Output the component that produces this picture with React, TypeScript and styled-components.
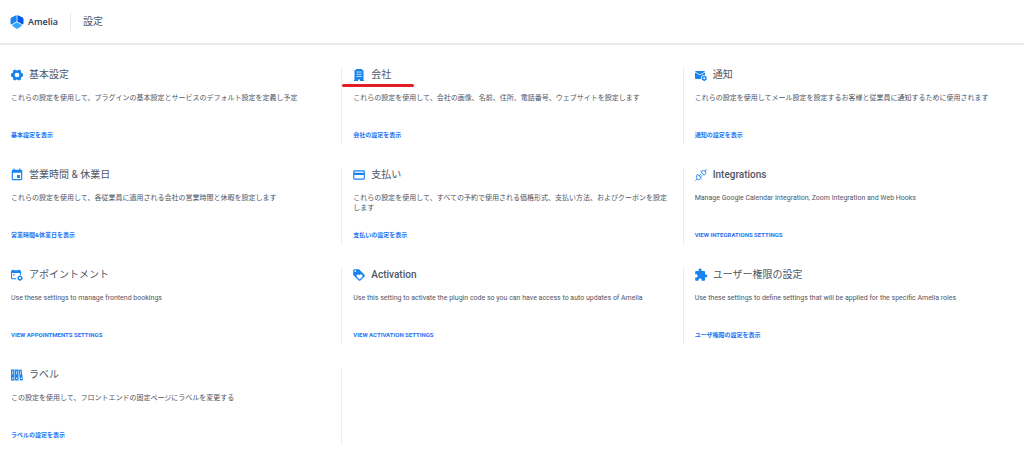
import React from "react";
import styled, { createGlobalStyle } from "styled-components";
import { MdCreditCard, MdEvent, MdExtension, MdLoyalty } from "react-icons/md";

const GlobalStyle = createGlobalStyle`
  *, *::before, *::after { box-sizing: border-box; }
  body {
    margin: 0;
    background: #fff;
    color: #4f5665;
    font-family: Roboto, "Noto Sans CJK JP", sans-serif;
  }
`;

const Header = styled.header`
  display: flex;
  align-items: center;
  height: 45px;
  padding: 0 10px;
  border-bottom: 2px solid #ebecf2;
`;

const Brand = styled.div`
  display: flex;
  align-items: center;
  gap: 4px;
  padding-right: 12px;
  height: 18px;
  border-right: 1px solid #e4e6ee;
  color: #2b3a5c;
  font-family: "Open Sans", sans-serif;
  font-size: 9px;
  font-weight: 600;
  line-height: 18px;
`;

const PageTitle = styled.h1`
  margin: 0;
  padding-left: 12px;
  font-size: 10px;
  font-weight: 400;
  line-height: 16px;
`;

const Grid = styled.main`
  display: grid;
  grid-template-columns: repeat(3, 1fr);
  row-gap: 24px;
  padding: 23px 0 20px;
`;

const Card = styled.section`
  display: flex;
  flex-direction: column;
  min-height: 76px;
  padding: 0 15px 4px 11px;
  border-left: 1px solid #e9ebf0;

  &:nth-child(3n + 1) {
    padding-left: 10px;
    border-left-color: transparent;
  }
`;

/* Closes the last row when it holds fewer than three cards. */
const RowEnd = styled.div`
  border-left: 1px solid #e9ebf0;
`;

const CardHead = styled.div`
  position: relative;
  display: flex;
  align-items: center;
  gap: 6px;
  height: 14px;
  margin-bottom: 11px;
`;

const IconBox = styled.span`
  display: flex;
  align-items: center;
  justify-content: center;
  width: 12px;
  height: 14px;
  color: #1a84ee;

  svg {
    flex: none;
    display: block;
  }
`;

const CardTitle = styled.h2`
  margin: 0;
  font-size: 10px;
  font-weight: ${(p: { $latin?: boolean }) => (p.$latin ? 500 : 400)};
  line-height: 14px;
`;

const Marker = styled.span`
  position: absolute;
  left: -11px;
  top: 16px;
  width: 72px;
  height: 3px;
  border-radius: 2px;
  background: #e21f26;
`;

const Description = styled.p`
  margin: 0;
  font-size: 7px;
  line-height: 10px;
`;

const CardLink = styled.a`
  align-self: flex-start;
  margin-top: auto;
  color: #2474f5;
  font-size: 6px;
  font-weight: 700;
  line-height: 10px;
  text-decoration: none;
  text-transform: uppercase;
`;

const Svg = ({ children }: { children: React.ReactNode }) => (
  <svg width="12" height="12" viewBox="0 0 24 24" fill="currentColor" aria-hidden="true">
    {children}
  </svg>
);

const Logo = () => (
  <svg width="14" height="14" viewBox="0 0 28 28" aria-hidden="true">
    <path d="M13.300 1v12L3 19.200Q1 18.500 1 16V8Q1 6 2.800 5L11 .8Q13.300 0 13.300 1z" fill="#1a84ee" />
    <path d="M14.700 1v12L25 19.200Q27 18.500 27 16V8Q27 6 25.200 5L17 .8Q14.700 0 14.700 1z" fill="#005aee" />
    <path d="M14 14.300L23.800 20.200Q24 21.500 22.500 22.300L16 26.800Q14 28 12 26.800L5.500 22.300Q4 21.500 4.200 20.200z" fill="#3ba6ff" />
  </svg>
);

const GearIcon = () => (
  <Svg>
    <path
      fillRule="evenodd"
      d="M6.500 1.500h3.200L12 3.700l2.300-2.200h3.200l2.300 1.500.2 4L24 9.500v5L20 17l-.2 4-2.300 1.500h-3.200L12 20.300l-2.300 2.200H6.500L4.200 21 4 17 0 14.500v-5L4 7l.2-4zM12 7.300a4.700 4.700 0 1 0 0 9.400 4.700 4.700 0 0 0 0-9.400z"
    />
  </Svg>
);

const BuildingIcon = () => (
  <Svg>
    <path
      fillRule="evenodd"
      d="M6 0h12v2h3v20h1v2h-8v-3h-4v3H2v-2h1V2h3zM7.500 5v2H10V5zm3.500 0v2h2.500V5zm3.500 0v2H17V5zM7.500 9.500v2H10v-2zm3.500 0v2h2.500v-2zm3.500 0v2H17v-2zM7.500 14v2H10v-2zm3.500 0v2h2.500v-2zm3.500 0v2H17v-2z"
    />
  </Svg>
);

const smallGear =
  "M16.500 12.500h3l.6 1.500 1.700-.2 1.500 2.600-1.100 1.300 1.100 1.300-1.500 2.600-1.700-.2-.6 1.600h-3l-.6-1.600-1.700.2-1.500-2.600 1.100-1.300-1.100-1.300 1.500-2.600 1.700.2zM18 15.600a2.100 2.100 0 1 0 0 4.200 2.100 2.100 0 0 0 0-4.200z";

const MailGearIcon = () => (
  <Svg>
    <path d="M2 4h16q1.500 0 1.800 1.500L10 11 .2 5.500Q.5 4 2 4z" />
    <path d="M0 7l10 5.700L20 7v5.500q-7.500-2-8.500 7.500H2q-2 0-2-2z" />
    <path fillRule="evenodd" transform="translate(.5 .8)" d={smallGear} />
  </Svg>
);

const CalendarGearIcon = () => (
  <Svg>
    <path
      fillRule="evenodd"
      d="M3 1h2v1.500h10V1h2v1.500h1q2 0 2 2V12h-2V8H2v10.500h8.500v2H2q-2 0-2-2v-14q0-2 2-2h1zM4 10.500h3v2.500H4z"
    />
    <path fillRule="evenodd" transform="translate(0 .5)" d={smallGear} />
  </Svg>
);

const PlugIcon = () => (
  <Svg>
    <g fill="none" stroke="currentColor" strokeWidth="1.800" strokeLinecap="round" strokeLinejoin="round">
      <path d="M12 6l6.500 6.500 2-2.200q2.500-3.300 0-6t-6-.600z" />
      <path d="M20.300 4L23 1.200" />
      <path d="M5.500 11l7.200 7.200-2.200 2.200q-3.500 2.300-6.200-.5t-1-6.400z" />
      <path d="M4 20.300L1.200 23M8.500 13.500l3.300-3.300M11 16l3.300-3.300" />
    </g>
  </Svg>
);

const BindersIcon = () => (
  <Svg>
    <path fillRule="evenodd" d="M0 1h7v22H0zM2.800 4v7h1.400V4zM3.500 17a1.500 1.500 0 1 0 0 3 1.500 1.500 0 0 0 0-3z" />
    <path fillRule="evenodd" d="M8 1h7v22H8zM10.800 4v7h1.400V4zM11.500 17a1.500 1.500 0 1 0 0 3 1.500 1.500 0 0 0 0-3z" />
    <path fillRule="evenodd" d="M15.700 1.500l5.300-.5 3 21.500-6.300.5zM18 4.500l.8 6.500 1.300-.2-.8-6.500zM20.500 17a1.400 1.400 0 1 0 0 2.800 1.400 1.400 0 0 0 0-2.800z" />
  </Svg>
);

interface Setting {
  title: string;
  text: string;
  link: string;
  icon: React.ReactNode;
  latin?: boolean;
  marked?: boolean;
}

const settings: Setting[] = [
  {
    title: "基本設定",
    text: "これらの設定を使用して、プラグインの基本設定とサービスのデフォルト設定を定義し予定",
    link: "基本設定を表示",
    icon: <GearIcon />,
  },
  {
    title: "会社",
    text: "これらの設定を使用して、会社の画像、名前、住所、電話番号、ウェブサイトを設定します",
    link: "会社の設定を表示",
    icon: <BuildingIcon />,
    marked: true,
  },
  {
    title: "通知",
    text: "これらの設定を使用してメール設定を設定するお客様と従業員に通知するために使用されます",
    link: "通知の設定を表示",
    icon: <MailGearIcon />,
  },
  {
    title: "営業時間 & 休業日",
    text: "これらの設定を使用して、各従業員に適用される会社の営業時間と休暇を設定します",
    link: "営業時間&休業日を表示",
    icon: <MdEvent size={14} />,
  },
  {
    title: "支払い",
    text: "これらの設定を使用して、すべての予約で使用される価格形式、支払い方法、およびクーポンを設定します",
    link: "支払いの設定を表示",
    icon: <MdCreditCard size={14} />,
  },
  {
    title: "Integrations",
    text: "Manage Google Calendar Integration, Zoom Integration and Web Hooks",
    link: "View Integrations Settings",
    icon: <PlugIcon />,
    latin: true,
  },
  {
    title: "アポイントメント",
    text: "Use these settings to manage frontend bookings",
    link: "View Appointments Settings",
    icon: <CalendarGearIcon />,
  },
  {
    title: "Activation",
    text: "Use this setting to activate the plugin code so you can have access to auto updates of Amelia",
    link: "View Activation Settings",
    icon: <MdLoyalty size={14} />,
    latin: true,
  },
  {
    title: "ユーザー権限の設定",
    text: "Use these settings to define settings that will be applied for the specific Amelia roles",
    link: "ユーザ権限の設定を表示",
    icon: <MdExtension size={14} />,
  },
  {
    title: "ラベル",
    text: "この設定を使用して、フロントエンドの固定ページにラベルを変更する",
    link: "ラベルの設定を表示",
    icon: <BindersIcon />,
  },
];

export default function App() {
  return (
    <>
      <GlobalStyle />
      <Header>
        <Brand>
          <Logo />
          Amelia
        </Brand>
        <PageTitle>設定</PageTitle>
      </Header>
      <Grid>
        {settings.map((s) => (
          <Card key={s.title}>
            <CardHead>
              <IconBox>{s.icon}</IconBox>
              <CardTitle $latin={s.latin}>{s.title}</CardTitle>
              {s.marked && <Marker />}
            </CardHead>
            <Description>{s.text}</Description>
            <CardLink href="#">{s.link}</CardLink>
          </Card>
        ))}
        {settings.length % 3 !== 0 && <RowEnd />}
      </Grid>
    </>
  );
}
